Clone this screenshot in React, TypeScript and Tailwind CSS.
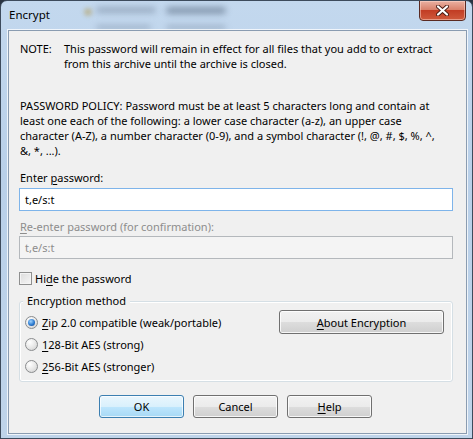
import React from "react";

const font = { fontFamily: '"Noto Sans", "Open Sans", sans-serif' };

function U({ children }: { children: React.ReactNode }) {
  return <span className="underline underline-offset-[2px] decoration-[1px]">{children}</span>;
}

function Radio({ checked }: { checked?: boolean }) {
  return (
    <div className="w-[13px] h-[13px] rounded-full border border-[#8a8c8e] bg-[radial-gradient(circle_at_35%_30%,#ffffff,#e6e6e6_55%,#c9c9c9)] flex items-center justify-center shrink-0">
      {checked && (
        <div className="w-[7px] h-[7px] rounded-full bg-[radial-gradient(circle_at_40%_35%,#9fd3ff,#2d7bd0_55%,#0f3f86)]" />
      )}
    </div>
  );
}

function Btn({
  children,
  def,
  className = "",
}: {
  children: React.ReactNode;
  def?: boolean;
  className?: string;
}) {
  return (
    <div
      className={
        "h-[23px] rounded-[3px] border flex items-center justify-center text-[11px] text-black " +
        (def
          ? "border-[#3c7fb1] bg-[linear-gradient(#eaf6fd_0%,#d9f0fc_50%,#bee6fd_50%,#a7d9f5_100%)] shadow-[inset_0_0_0_1px_rgba(255,255,255,0.7)] "
          : "border-[#707070] bg-[linear-gradient(#f2f2f2_0%,#ebebeb_50%,#dddddd_50%,#cfcfcf_100%)] shadow-[inset_0_0_0_1px_rgba(255,255,255,0.8)] ") +
        className
      }
    >
      {children}
    </div>
  );
}

export default function App() {
  return (
    <div className="w-[473px] h-[439px] bg-[#2a3442] relative overflow-hidden" style={font}>
      <div className="absolute inset-0 rounded-t-[7px] border border-[#3d4b5c] bg-[linear-gradient(180deg,#c3d8ee_0%,#b9d0e9_40%,#bfd4ea_100%)] flex flex-col overflow-hidden">
        {/* blurred background decoration behind glass */}
        <div className="absolute left-[95px] top-[6px] w-[60px] h-[6px] rounded-full bg-[#7d8fa6] blur-[3px] opacity-60" />
        <div className="absolute left-[165px] top-[6px] w-[60px] h-[7px] rounded-full bg-[#5d6f86] blur-[3px] opacity-60" />
        <div className="absolute left-[83px] top-[7px] w-[8px] h-[8px] rounded-full bg-[#b5a46a] blur-[2px] opacity-60" />
        <div className="absolute left-[95px] top-[24px] w-[55px] h-[5px] rounded-full bg-[#7d8fa6] blur-[3px] opacity-50" />
        <div className="absolute left-[165px] top-[24px] w-[60px] h-[5px] rounded-full bg-[#7d8fa6] blur-[3px] opacity-50" />

        {/* title bar */}
        <div className="h-[28px] relative shrink-0">
          <div className="absolute left-[8px] top-[6px] text-[11.5px] leading-[16px] text-black">Encrypt</div>
          <div className="absolute left-[418px] top-[-1px] w-[47px] h-[21px] rounded-b-[4px] border border-[#5a2a22] bg-[linear-gradient(180deg,#eab1a2_0%,#d9826c_45%,#c23d24_50%,#cf5a3c_100%)] shadow-[inset_0_0_0_1px_rgba(255,220,210,0.5)] flex items-center justify-center">
            <svg width="13" height="11" viewBox="0 0 13 11">
              <path d="M2 1.5 L11 9.5 M11 1.5 L2 9.5" stroke="#4a1d15" strokeWidth="4" strokeLinecap="round" />
              <path d="M2 1.5 L11 9.5 M11 1.5 L2 9.5" stroke="#ffffff" strokeWidth="2.2" strokeLinecap="round" />
            </svg>
          </div>
        </div>

        {/* client area */}
        <div className="ml-[7px] mr-[5px] mt-[1px] h-[404px] border border-[#8a9cb1] bg-[#f0f0f0] shadow-[0_0_0_1px_rgba(255,255,255,0.75)] text-[11px] leading-[15px] text-black pl-[10px] pr-[13px] flex flex-col relative">
          <div className="mt-[10px] ml-[1px] flex whitespace-nowrap">
            <div className="w-[44px] shrink-0">NOTE:</div>
            <div>
              This password will remain in effect for all files that you add to or extract
              <br />
              from this archive until the archive is closed.
            </div>
          </div>

          <div className="mt-[27px] ml-[1px] whitespace-nowrap">
            PASSWORD POLICY: Password must be at least 5 characters long and contain at
            <br />
            least one each of the following: a lower case character (a-z), an upper case
            <br />
            character (A-Z), a number character (0-9), and a symbol character (!, @, #, $, %, ^,
            <br />
            &amp;, *, ...).
          </div>

          <div className="mt-[12px] ml-[1px]">
            Enter <U>p</U>assword:
          </div>
          <div className="mt-[3px] h-[23px] border border-[#7eb4ea] bg-white flex items-center pl-[5px]">
            t,e/s:t
          </div>

          <div className="mt-[8px] ml-[1px] text-[#8d8d8d]">
            <U>R</U>e-enter password (for confirmation):
          </div>
          <div className="mt-[2px] h-[23px] border border-[#b4b8bc] bg-[#f4f4f4] flex items-center pl-[5px] text-[#8d8d8d]">
            t,e/s:t
          </div>

          <div className="mt-[12px] h-[15px] flex items-center">
            <div className="w-[13px] h-[13px] border border-[#8e8f8f] bg-[linear-gradient(135deg,#dcdcdc,#f6f6f6)] shadow-[inset_0_0_0_1px_#f4f4f4] shrink-0" />
            <span className="ml-[3px]">
              Hi<U>d</U>e the password
            </span>
          </div>

          {/* group box */}
          <div className="mt-[15px] relative border border-[#d5dfe5] rounded-[3px] shadow-[inset_0_0_0_1px_#ffffff] pt-[9px] pb-[4px] pl-[5px] pr-[8px]">
            <div className="absolute left-[3px] top-[-9px] px-[4px] bg-[#f0f0f0] leading-[15px]">
              Encryption method
            </div>
            <div className="h-[22px] flex items-center justify-between">
              <div className="flex items-center">
                <Radio checked />
                <span className="ml-[4px]">
                  <U>Z</U>ip 2.0 compatible (weak/portable)
                </span>
              </div>
              <Btn className="w-[165px] h-[24px]">
                <span>
                  <U>A</U>bout Encryption
                </span>
              </Btn>
            </div>
            <div className="h-[22px] flex items-center">
              <Radio />
              <span className="ml-[4px]">
                <U>1</U>28-Bit AES (strong)
              </span>
            </div>
            <div className="h-[22px] flex items-center">
              <Radio />
              <span className="ml-[4px]">
                <U>2</U>56-Bit AES (stronger)
              </span>
            </div>
          </div>

          <div className="mt-[13px] ml-[80px] flex gap-[9px]">
            <Btn def className="w-[85px]">OK</Btn>
            <Btn className="w-[85px]">Cancel</Btn>
            <Btn className="w-[85px]">
              <span>
                <U>H</U>elp
              </span>
            </Btn>
          </div>
        </div>
      </div>
    </div>
  );
}
